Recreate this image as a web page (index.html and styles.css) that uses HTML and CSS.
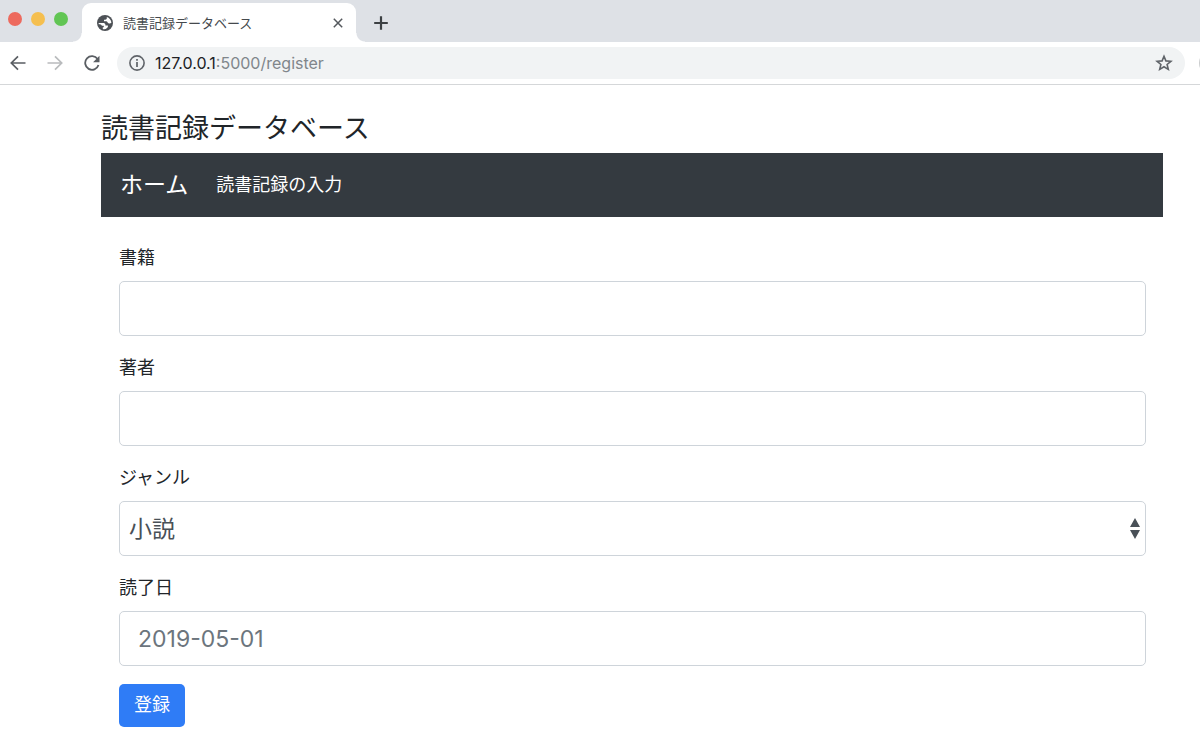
FILE: index.html
```html
<!DOCTYPE html>
<html lang="ja">
<head>
<meta charset="utf-8">
<meta name="viewport" content="width=device-width, initial-scale=1">
<title>読書記録データベース</title>
<link rel="stylesheet" href="styles.css">
</head>
<body>
<div class="browser">
  <div class="tab-strip">
    <div class="window-controls">
      <button class="dot dot-close" type="button" aria-label="閉じる"></button>
      <button class="dot dot-minimize" type="button" aria-label="最小化"></button>
      <button class="dot dot-zoom" type="button" aria-label="拡大"></button>
    </div>
    <div class="tab">
      <svg class="favicon" viewBox="0 0 16 16" aria-hidden="true">
        <circle cx="8" cy="8" r="8" fill="#4d5156"/>
        <path fill="#fff" d="M1.600 8h4.200c1.700 0 2.600.6 2.600 1.800v.6h2c.6 0 .7.400.6.9-.4 1.700-1.800 2.900-3.700 2.900-.5 0-1-.1-1.500-.2v-1.700h1v-1.500H4.900C4.600 9.800 3.800 9.300 3 9.200H1.800C1.700 8.800 1.600 8.400 1.600 8z"/>
        <path fill="#fff" d="M9.800 1.900c2.600.8 4.400 3 4.600 5.800-.6.600-1.300.9-2.200.8-1.100-.1-1.500-.5-1.800-1.400-.2-.7-.8-.9-1.700-.9H7V4.700h1.200c1 0 1.600-.5 1.600-1.400z"/>
      </svg>
      <span class="tab-title">読書記録データベース</span>
      <button class="icon-button tab-close" type="button" aria-label="タブを閉じる">
        <svg viewBox="0 0 10 10" width="10" height="10"><path d="M.8.8l8.400 8.400M9.200.8L.8 9.200" stroke="#54585d" stroke-width="1.500" fill="none"/></svg>
      </button>
    </div>
    <button class="icon-button new-tab" type="button" aria-label="新しいタブ">
      <svg viewBox="0 0 14 14" width="14" height="14"><path d="M7 .2v13.600M.2 7h13.600" stroke="#3c4043" stroke-width="2.200" fill="none"/></svg>
    </button>
  </div>
  <div class="toolbar">
    <div class="nav-buttons">
      <button class="icon-button" type="button" aria-label="戻る">
        <svg viewBox="0 0 16 16" width="16" height="16"><path d="M15.500 8H1.500M8 1.300L1.300 8 8 14.700" stroke="#5a5e63" stroke-width="1.700" fill="none"/></svg>
      </button>
      <button class="icon-button" type="button" aria-label="進む">
        <svg viewBox="0 0 16 16" width="16" height="16"><path d="M.5 8h14M8 1.300L14.700 8 8 14.700" stroke="#b9bbbd" stroke-width="1.700" fill="none"/></svg>
      </button>
      <button class="icon-button" type="button" aria-label="再読み込み">
        <svg viewBox="0 0 16 16" width="16" height="16"><path d="M13.600 4.100A6.800 6.800 0 1 0 14.500 10" stroke="#5a5e63" stroke-width="1.800" fill="none"/><path d="M15.500.8v6.400H9.100z" fill="#5a5e63"/></svg>
      </button>
    </div>
    <div class="address-bar">
      <svg viewBox="0 0 16 16" width="16" height="16" aria-hidden="true"><circle cx="8" cy="8" r="7.100" stroke="#5f6368" stroke-width="1.600" fill="none"/><path d="M8 7v5M8 4v1.800" stroke="#5f6368" stroke-width="1.700" fill="none"/></svg>
      <span class="url"><span class="url-host">127.0.0.1</span>:5000/register</span>
      <button class="icon-button star" type="button" aria-label="ブックマーク">
        <svg viewBox="0 0 18 18" width="18" height="18"><path d="M9 2.300l1.900 4.600 5 .4-3.800 3.200 1.200 4.900L9 12.800l-4.300 2.600 1.200-4.900-3.800-3.200 5-.4z" stroke="#5f6368" stroke-width="1.600" fill="none"/></svg>
      </button>
    </div>
    <span class="profile"></span>
  </div>
</div>

<main class="container">
  <h1 class="site-title">読書記録データベース</h1>
  <nav class="navbar">
    <a class="navbar-brand" href="#">ホーム</a>
    <a class="navbar-link" href="#">読書記録の入力</a>
  </nav>
  <form class="form">
    <div class="form-group">
      <label class="label" for="title">書籍</label>
      <input class="control" id="title" type="text">
    </div>
    <div class="form-group">
      <label class="label" for="author">著者</label>
      <input class="control" id="author" type="text">
    </div>
    <div class="form-group">
      <label class="label" for="genre">ジャンル</label>
      <div class="select-wrap">
        <select class="control select" id="genre"><option>小説</option></select>
        <svg class="select-arrows" viewBox="0 0 10 21" width="10" height="21" aria-hidden="true"><path fill="#495057" d="M5 0l5 9H0zM0 12h10l-5 9z"/></svg>
      </div>
    </div>
    <div class="form-group">
      <label class="label" for="date">読了日</label>
      <input class="control" id="date" type="text" placeholder="2019-05-01">
    </div>
    <button class="submit" type="submit">登録</button>
  </form>
</main>
</body>
</html>
```
FILE: styles.css
```css
* {
  box-sizing: border-box;
}

body {
  margin: 0;
  background: #fff;
  color: #212529;
  font-family: Inter, "Noto Sans CJK JP", sans-serif;
  font-size: 18px;
  line-height: 28px;
}

button {
  font: inherit;
  border: 0;
  padding: 0;
  cursor: pointer;
}

svg {
  display: block;
}

.browser {
  border-bottom: 1px solid #d5d7d9;
}

.tab-strip {
  display: flex;
  align-items: flex-end;
  height: 42px;
  background: #dee1e6;
}

.window-controls {
  display: flex;
  gap: 9px;
  width: 82px;
  padding: 0 0 16px 8px;
}

.dot {
  width: 14px;
  height: 14px;
  border-radius: 50%;
}

.dot-close {
  background: #ed6a5e;
}

.dot-minimize {
  background: #f5bf4f;
}

.dot-zoom {
  background: #61c554;
}

.tab {
  position: relative;
  display: flex;
  align-items: center;
  gap: 10px;
  width: 274px;
  height: 39px;
  padding: 0 13px 0 15px;
  background: #fff;
  border-radius: 9px 9px 0 0;
}

.tab::before,
.tab::after {
  content: "";
  position: absolute;
  bottom: 0;
  width: 9px;
  height: 9px;
}

.tab::before {
  right: 100%;
  background: radial-gradient(circle at 0 0, transparent 8px, #fff 9px);
}

.tab::after {
  left: 100%;
  background: radial-gradient(circle at 100% 0, transparent 8px, #fff 9px);
}

.favicon {
  width: 16px;
  height: 16px;
}

.tab-title {
  flex: 1;
  color: #45494d;
  font-size: 13px;
  line-height: 20px;
}

.icon-button {
  background: none;
}

.new-tab {
  padding: 0 18px 12px;
}

.toolbar {
  display: flex;
  align-items: center;
  height: 42px;
  overflow: hidden;
}

.nav-buttons {
  display: flex;
  gap: 21px;
  padding: 0 17px 0 10px;
}

.address-bar {
  display: flex;
  flex: 1;
  align-items: center;
  gap: 10px;
  height: 32px;
  padding: 0 12px;
  background: #f1f3f4;
  border-radius: 16px;
}

.url {
  flex: 1;
  color: #80868b;
  font-size: 16px;
  line-height: 24px;
}

.url-host {
  color: #202124;
}

.profile {
  width: 24px;
  height: 24px;
  margin: 0 -23px 0 14px;
  background: #c9cbcd;
  border-radius: 50%;
}

.container {
  padding: 27px 37px 27px 101px;
}

.site-title {
  margin: 0 0 7px;
  font-size: 27px;
  font-weight: 400;
  line-height: 34px;
}

.navbar {
  display: flex;
  align-items: center;
  gap: 28px;
  height: 64px;
  padding: 0 19px;
  background: #343a40;
}

.navbar a {
  color: #fff;
  text-decoration: none;
}

.navbar-brand {
  font-size: 23px;
}

.form {
  padding: 27px 17px 0 18px;
}

.form-group {
  margin-bottom: 18px;
}

.label {
  display: block;
  margin-bottom: 9px;
}

.control {
  display: block;
  width: 100%;
  height: 55px;
  padding: 0 18px;
  color: #495057;
  background: #fff;
  border: 1px solid #ced4da;
  border-radius: 5px;
  font-family: inherit;
  font-size: 23px;
}

.control::placeholder {
  color: #6c757d;
  opacity: 1;
}

.select-wrap {
  position: relative;
}

.select {
  appearance: none;
  padding: 0 27px 0 9px;
}

.select-arrows {
  position: absolute;
  top: 17px;
  right: 6px;
  pointer-events: none;
}

.submit {
  display: block;
  padding: 7px 15px 8px;
  color: #fff;
  background: #2f7cf6;
  border-radius: 5px;
}
```
